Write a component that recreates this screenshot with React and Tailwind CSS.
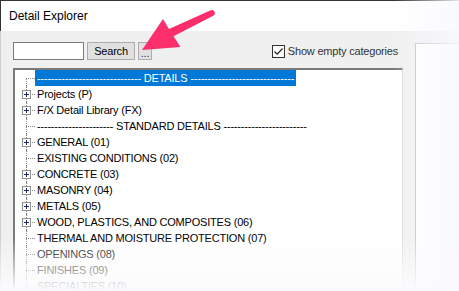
import React from "react";

const rows = [
  { label: "------------------------------ DETAILS ------------------------------", selected: true, first: true },
  { label: "Projects (P)", box: true },
  { label: "F/X Detail Library (FX)", box: true },
  { label: "---------------------- STANDARD DETAILS ------------------------" },
  { label: "GENERAL (01)", box: true },
  { label: "EXISTING CONDITIONS (02)" },
  { label: "CONCRETE (03)", box: true },
  { label: "MASONRY (04)", box: true },
  { label: "METALS (05)", box: true },
  { label: "WOOD, PLASTICS, AND COMPOSITES (06)", box: true },
  { label: "THERMAL AND MOISTURE PROTECTION (07)" },
  { label: "OPENINGS (08)" },
  { label: "FINISHES (09)" },
  { label: "SPECIALTIES (10)" },
];

function PlusBox() {
  return (
    <div className="absolute left-[7px] top-[4px] flex h-[9px] w-[9px] items-center justify-center border border-[#919191] bg-white">
      <svg width="7" height="7" viewBox="0 0 7 7">
        <rect x="1" y="3" width="5" height="1" fill="#1f2a6b" />
        <rect x="3" y="1" width="1" height="5" fill="#1f2a6b" />
      </svg>
    </div>
  );
}

function TreeRow({ label, box, selected, first }) {
  return (
    <div className="flex h-4 items-center">
      <div className="relative h-full w-5 shrink-0">
        <div className={`absolute bottom-0 left-[11px] border-l border-dotted border-[#8a8a8a] ${first ? "top-1/2" : "top-0"}`} />
        <div className="absolute left-[11px] right-0 top-1/2 border-t border-dotted border-[#8a8a8a]" />
        {box && <PlusBox />}
      </div>
      <span className={`whitespace-nowrap px-[2px] leading-4 ${selected ? "bg-[#0078d7] text-white" : "text-black"}`}>{label}</span>
    </div>
  );
}

export default function App() {
  return (
    <div className="relative flex h-[291px] w-[459px] flex-col overflow-hidden bg-white font-['Liberation_Sans',Arial,sans-serif] text-[11px] tracking-[-0.2px]">
      <div className="h-px shrink-0 bg-[#333]" />
      <div className="flex h-[30px] shrink-0 items-center border-l border-[#333] pl-[8px] text-[12px] tracking-normal text-black">
        Detail Explorer
      </div>
      <div className="flex min-h-0 flex-1 border-l border-[#cfcfcf] bg-[#f0f0f0]">
        <div className="ml-[12px] flex w-[390px] flex-col pt-[11px]">
          <div className="flex h-[18px] items-center">
            <div className="h-[18px] w-[71px] border border-[#7a7a7a] bg-white" />
            <button className="ml-[3px] h-[18px] w-[48px] border border-[#adadad] bg-[#e1e1e1] leading-4 text-black">Search</button>
            <button className="ml-[3px] h-[18px] w-[14px] border border-[#adadad] bg-[#e1e1e1] pt-[3px] leading-3 text-[#1b2a6b]">...</button>
            <div className="ml-auto flex items-center pr-[5px]">
              <div className="flex h-[13px] w-[13px] items-center justify-center border border-[#333] bg-white">
                <svg width="11" height="11" viewBox="0 0 11 11">
                  <path d="M1.5 5.5 L4.2 8.2 L9.5 2.5" fill="none" stroke="#222" strokeWidth="1.2" />
                </svg>
              </div>
              <span className="ml-[3px] text-[#333]">Show empty categories</span>
            </div>
          </div>
          <div className="mt-[8px] flex-1 border-l-2 border-t-2 border-r border-[#7a7a7a] border-r-[#dadada] bg-white">
            {rows.map((r, i) => (
              <TreeRow key={i} {...r} />
            ))}
          </div>
        </div>
        <div className="ml-[12px] mt-[12px] flex-1 border-l border-t border-[#bdbdbd] bg-white" />
      </div>

      <svg className="pointer-events-none absolute left-0 top-0" width="459" height="291">
        <path
          d="M142 50 L163 19 L169 29 L210.7 10.3 A3 3 0 0 1 213.3 15.7 L173.5 36.3 L180.5 47 Z"
          fill="#fc2e6c"
        />
      </svg>
      <div className="pointer-events-none absolute bottom-0 right-0 top-0 w-[66px] bg-gradient-to-r from-transparent to-[#f8f9fd]/90" />
      <div className="pointer-events-none absolute bottom-0 left-0 right-0 h-[54px] bg-gradient-to-b from-transparent to-[#fbfbfd]" />
    </div>
  );
}
